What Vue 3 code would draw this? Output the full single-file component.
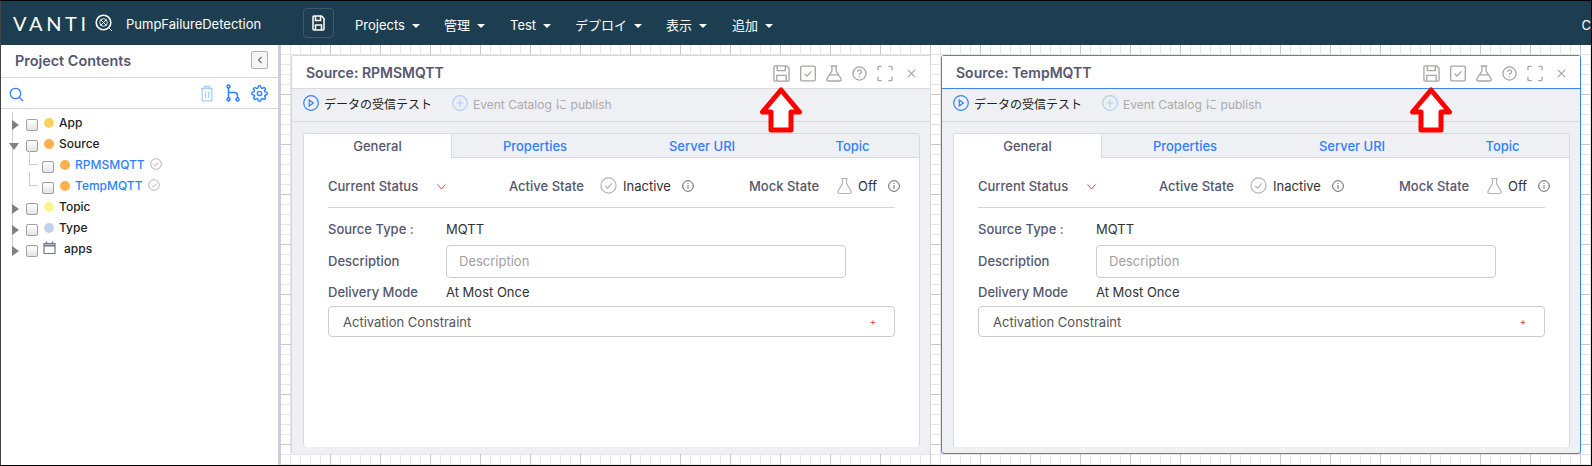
<template>
  <div class="page">
    <header class="navbar">
      <div class="logo">
        <span>VANTI</span>
        <svg width="18" height="18" viewBox="0 0 18 18" fill="none" stroke="#fff">
          <circle cx="8.500" cy="8.500" r="7.300" stroke-width="1.600" />
          <circle cx="8.500" cy="8.500" r="3.800" stroke-width=".9" />
          <path d="M5.800 5.800l5.400 5.400M11.200 5.800l-5.400 5.400M13.500 13.500l3.500 3.500" stroke-width="1" />
        </svg>
      </div>
      <span class="app-name">PumpFailureDetection</span>
      <button class="nav-save">
        <svg width="13" height="16" viewBox="0 0 13 16" fill="none" stroke="#fff" stroke-width="1.500">
          <path d="M1 2q0-1 1-1h7.500l2.500 2.500v10.500q0 1-1 1h-9q-1 0-1-1z" />
          <path d="M3.500 1v4.500h5v-4.500M3.500 15v-5h6v5" />
        </svg>
      </button>
      <nav class="menu">
        <span v-for="m in menus" :key="m.label" class="menu-item" :style="{ width: m.width + 'px' }">
          {{ m.label }}<i class="caret"></i>
        </span>
      </nav>
      <span class="nav-right">C</span>
    </header>

    <div class="main">
      <aside class="sidebar">
        <div class="side-title">
          <span>Project Contents</span>
          <button class="collapse">
            <svg width="6" height="8" viewBox="0 0 6 8" fill="none" stroke="#777" stroke-width="1.200"><path d="M4.500 1L1.500 4l3 3" /></svg>
          </button>
        </div>
        <div class="side-tools">
          <svg class="search" width="15" height="15" viewBox="0 0 15 15" fill="none" stroke="#2f7fff" stroke-width="1.300">
            <circle cx="6.500" cy="6.500" r="5.200" /><path d="M10.300 10.300l3.700 3.700" />
          </svg>
          <svg class="tool trash" width="14" height="17" viewBox="0 0 14 17" fill="none" stroke="#a9d0fb" stroke-width="1.300">
            <path d="M1 3.500h12M4.500 3.500v-2h5v2M2.200 3.500v12.300h9.600v-12.300M5.500 6.500v6.500M8.500 6.500v6.500" />
          </svg>
          <svg class="tool" width="14" height="18" viewBox="0 0 14 18" fill="none" stroke="#2f7fff" stroke-width="1.500">
            <circle cx="2.500" cy="2.500" r="1.500" /><circle cx="2.500" cy="15.500" r="1.500" /><circle cx="11.500" cy="15.500" r="1.500" />
            <path d="M2.500 4v10M2.500 8.500h6q3 0 3 3v2.500" />
          </svg>
          <svg class="tool" width="17" height="17" viewBox="0 0 24 24" fill="none" stroke="#2f7fff" stroke-width="2">
            <circle cx="12" cy="12" r="3" />
            <path d="M19.400 15a1.650 1.650 0 0 0 .33 1.820l.06.06a2 2 0 1 1-2.830 2.830l-.06-.06a1.650 1.650 0 0 0-2.820 1.170V21a2 2 0 1 1-4 0v-.09a1.650 1.650 0 0 0-2.820-1.170l-.06.06a2 2 0 1 1-2.830-2.830l.06-.06A1.650 1.650 0 0 0 3.090 14H3a2 2 0 1 1 0-4h.09a1.650 1.650 0 0 0 1.170-2.820l-.06-.06a2 2 0 1 1 2.830-2.830l.06.06A1.650 1.650 0 0 0 10 3.090V3a2 2 0 1 1 4 0v.09a1.650 1.650 0 0 0 2.820 1.170l.06-.06a2 2 0 1 1 2.830 2.830l-.06.06A1.650 1.650 0 0 0 20.910 10H21a2 2 0 1 1 0 4h-.09a1.650 1.650 0 0 0-1.510 1z" />
          </svg>
        </div>
        <ul class="tree">
          <li v-for="n in nodes" :key="n.label" class="tree-row" :class="{ child: n.child, last: n.last }">
            <i v-if="!n.child" class="arrow" :class="{ open: n.open }"></i>
            <span class="check"></span>
            <svg v-if="n.folder" class="cal" width="13" height="13" viewBox="0 0 13 13" fill="none" stroke="#6f7a8c">
              <path d="M1 2.500h11v10h-11z" stroke-width="1.200" /><path d="M1 4.500h11" stroke-width="2" /><path d="M3.500 .5v2M9.500 .5v2" stroke-width="1.300" />
            </svg>
            <span v-else class="dot" :style="{ background: n.color }"></span>
            <span class="node-label" :class="{ link: n.child, apps: n.folder }">{{ n.label }}</span>
            <svg v-if="n.child" class="ok" width="12" height="12" viewBox="0 0 12 12" fill="none" stroke="#b5b5b5">
              <circle cx="6" cy="6" r="5.300" /><path d="M3.500 6.200l1.800 1.700 3.200-3.400" />
            </svg>
          </li>
        </ul>
      </aside>

      <section class="canvas">
        <article v-for="p in panels" :key="p.name" class="panel" :class="{ active: p.active }" :style="{ left: p.left + 'px' }">
          <div class="panel-head">
            <h2>Source: {{ p.name }}</h2>
            <div class="head-icons">
              <svg width="17" height="17" viewBox="0 0 18 18" fill="none" stroke="#a8a6a4" stroke-width="1.400">
                <path d="M1 2q0-1 1-1h12.500l2.500 2.500v12.500q0 1-1 1h-14q-1 0-1-1z" />
                <path d="M4.500 1v5h8.500v-5M4 17v-6h10v6" />
              </svg>
              <svg width="16" height="17" viewBox="0 0 17 17" fill="none" stroke="#a8a6a4" stroke-width="1.400">
                <rect x=".7" y=".7" width="15.600" height="15.600" rx="1.500" /><path d="M5 8.800l2.500 2.500 4.500-5" />
              </svg>
              <svg width="16" height="17" viewBox="0 0 17 18" fill="none" stroke="#a8a6a4" stroke-width="1.400">
                <path d="M5 1h7M6.300 1v5.500l-5 7.500q-1.300 3 1.700 3h11q3 0 1.700-3l-5-7.500v-5.500M4 10.500h9" />
              </svg>
              <svg width="15" height="15" viewBox="0 0 16 16" fill="none" stroke="#a8a6a4" stroke-width="1.400">
                <circle cx="8" cy="8" r="7" /><path d="M5.800 6.200q.3-2 2.300-2t2.100 1.900q0 1.200-1.200 1.800-1 .5-1 1.600M8 11v1.200" />
              </svg>
              <svg width="16" height="17" viewBox="0 0 17 17" fill="none" stroke="#a8a6a4" stroke-width="1.400">
                <path d="M1 5v-3q0-1 1-1h3M12 1h3q1 0 1 1v3M16 12v3q0 1-1 1h-3M5 16h-3q-1 0-1-1v-3" />
              </svg>
              <svg class="close" width="9" height="9" viewBox="0 0 10 10" fill="none" stroke="#a8a6a4" stroke-width="1.400">
                <path d="M1 1l8 8M9 1l-8 8" />
              </svg>
            </div>
            <svg class="red-arrow" width="46" height="50" viewBox="0 0 46 50" fill="#fff" stroke="#f00" stroke-width="5" stroke-linejoin="round">
              <path d="M23 5L4.500 27h8.500v18h20v-18h8.500z" />
            </svg>
          </div>
          <div class="panel-tools">
            <span class="tool-btn">
              <svg width="16" height="16" viewBox="0 0 16 16" fill="none" stroke="#2f7fff" stroke-width="1.200">
                <circle cx="8" cy="8" r="7.300" /><path d="M6.300 5l4 3-4 3z" />
              </svg>
              データの受信テスト
            </span>
            <span class="tool-btn off">
              <svg width="16" height="16" viewBox="0 0 16 16" fill="none" stroke="#a9d0fb" stroke-width="1.200">
                <circle cx="8" cy="8" r="7.300" /><path d="M8 4.500v7M4.500 8h7" />
              </svg>
              Event Catalog に publish
            </span>
          </div>
          <div class="card">
            <div class="tabs">
              <span class="tab current">General</span>
              <span class="tab">Properties</span>
              <span class="tab">Server URI</span>
              <span class="tab">Topic</span>
            </div>
            <div class="card-body">
              <div class="status-row">
                <span class="label status-label">Current Status</span>
                <svg class="down" width="9" height="6" viewBox="0 0 9 6" fill="none" stroke="#f0364a"><path d="M.5 .5l4 4.500 4-4.500" /></svg>
                <span class="label active-label">Active State</span>
                <svg class="state-icon" width="17" height="17" viewBox="0 0 18 18" fill="none" stroke="#b5b5b5" stroke-width="1.300">
                  <circle cx="9" cy="9" r="8" /><path d="M5.500 9.500l2.500 2.200 4.500-5" />
                </svg>
                <span class="value">Inactive</span>
                <svg class="info" width="12" height="12" viewBox="0 0 13 13" fill="none" stroke="#555"><circle cx="6.500" cy="6.500" r="5.800" /><path d="M6.500 5.500v4M6.500 3.300v1" /></svg>
                <span class="label mock-label">Mock State</span>
                <svg class="state-icon flask" width="15" height="18" viewBox="0 0 16 18" fill="none" stroke="#b5b5b5" stroke-width="1.300">
                  <path d="M4.500 1h7M5.800 1v5.500l-4.500 7.500q-1.300 3 1.700 3h10q3 0 1.700-3l-4.500-7.500v-5.500" />
                </svg>
                <span class="value">Off</span>
                <svg class="info" width="12" height="12" viewBox="0 0 13 13" fill="none" stroke="#555"><circle cx="6.500" cy="6.500" r="5.800" /><path d="M6.500 5.500v4M6.500 3.300v1" /></svg>
              </div>
              <div class="divider"></div>
              <div class="field type-row"><span class="label">Source Type :</span><span class="value">MQTT</span></div>
              <div class="field desc-row">
                <span class="label">Description</span>
                <input class="desc-input" placeholder="Description" />
              </div>
              <div class="field mode-row"><span class="label">Delivery Mode</span><span class="value">At Most Once</span></div>
              <div class="constraint"><span>Activation Constraint</span><b>+</b></div>
            </div>
          </div>
        </article>
      </section>
    </div>
  </div>
</template>

<script setup>
const menus = [
  { label: 'Projects', width: 89 },
  { label: '管理', width: 66 },
  { label: 'Test', width: 65 },
  { label: 'デプロイ', width: 91 },
  { label: '表示', width: 66 },
  { label: '追加', width: 60 }
]

const nodes = [
  { label: 'App', color: '#fbd35f' },
  { label: 'Source', color: '#ffb04d', open: true },
  { label: 'RPMSMQTT', color: '#ffb04d', child: true },
  { label: 'TempMQTT', color: '#ffb04d', child: true, last: true },
  { label: 'Topic', color: '#f8f58c' },
  { label: 'Type', color: '#c3d0ef' },
  { label: 'apps', folder: true }
]

// ウィンドウはキャンバス上の自由配置
const panels = [
  { name: 'RPMSMQTT', left: 10, active: false },
  { name: 'TempMQTT', left: 660, active: true }
]
</script>

<style>
html, body { margin: 0; background: #fff; overflow: hidden; }
</style>

<style scoped>
.page {
  width: 1592px;
  height: 466px;
  box-sizing: border-box;
  border: 1px solid #000;
  border-left-color: #444;
  overflow: hidden;
  display: flex;
  flex-direction: column;
  font-family: Inter, "Noto Sans CJK JP", sans-serif;
  font-size: 13px;
  color: #333;
}
.navbar {
  height: 44px;
  flex: none;
  background: #1c3e50;
  color: #fff;
  display: flex;
  align-items: center;
  padding-left: 12px;
  position: relative;
}
.logo {
  display: flex;
  align-items: center;
  gap: 5px;
  width: 113px;
  font-family: Lato, sans-serif;
  font-weight: 400;
  font-size: 20px;
  letter-spacing: 3.6px;
}
.app-name { font-size: 13px; width: 177px; padding-top: 2px; }
.nav-save {
  width: 31px;
  height: 30px;
  padding: 0;
  background: transparent;
  border: 1px solid #3d5a6c;
  border-radius: 4px;
  display: flex;
  align-items: center;
  justify-content: center;
  margin-right: 21px;
}
.menu { display: flex; align-items: baseline; padding-top: 2px; }
.menu-item { font-size: 13px; white-space: nowrap; }
.caret {
  display: inline-block;
  margin-left: 7px;
  vertical-align: 2px;
  border-top: 4px solid #fff;
  border-left: 4px solid transparent;
  border-right: 4px solid transparent;
}
.nav-right { position: absolute; right: 0; top: 16px; font-size: 13px; }
.main { flex: 1; display: flex; min-height: 0; }
.sidebar {
  width: 277px;
  flex: none;
  background: #fff;
  box-sizing: border-box;
}
.side-title {
  height: 33px;
  box-sizing: border-box;
  display: flex;
  align-items: center;
  justify-content: space-between;
  padding: 0 10px 2px 14px;
  border-bottom: 1px solid #d5d8dc;
  font-size: 14.4px;
  font-weight: 600;
  color: #555770;
}
.collapse {
  width: 17px;
  height: 18px;
  padding: 0;
  background: #f4f5f7;
  border: 1px solid #b5b0aa;
  border-radius: 2px;
  display: flex;
  align-items: center;
  justify-content: center;
}
.side-tools {
  height: 31px;
  box-sizing: border-box;
  display: flex;
  align-items: center;
  gap: 11px;
  padding: 0 10px 0 8px;
  border-bottom: 1px solid #d5d8dc;
}
.search { margin-right: auto; margin-top: 2px; }
.trash { margin-right: 1px; }
.tree {
  list-style: none;
  margin: 3px 0 0 11px;
  padding: 0;
  border-left: 1px solid #d0d0d0;
  width: 220px;
  height: 141px;
}
.tree-row {
  height: 21px;
  display: flex;
  align-items: center;
  position: relative;
  padding-left: 13px;
  font-size: 12px;
  font-weight: 500;
  color: #222;
}
.tree-row.child { padding-left: 29px; }
.tree-row.child::before {
  content: "";
  position: absolute;
  left: 16px;
  top: -3px;
  width: 8px;
  height: 13px;
  border-left: 1px solid #ccc;
  border-bottom: 1px solid #ccc;
}
.arrow {
  position: absolute;
  left: -1px;
  top: 8px;
  border-left: 7px solid #808080;
  border-top: 5px solid transparent;
  border-bottom: 5px solid transparent;
}
.arrow.open {
  left: -4px;
  top: 10px;
  border-left: 5px solid transparent;
  border-right: 5px solid transparent;
  border-top: 7px solid #808080;
  border-bottom: 0;
}
.check {
  width: 10px;
  height: 10px;
  border: 1px solid #a0a0a0;
  border-radius: 2px;
  background: linear-gradient(#fff, #e4e4e4);
  margin-top: 4px;
  flex: none;
}
.dot {
  width: 10px;
  height: 10px;
  border-radius: 50%;
  margin: 0 5px 0 6px;
  flex: none;
}
.cal { margin: -2px 6px 0 5px; flex: none; }
.node-label.apps { margin-left: 2px; }
.node-label.link { color: #2f7fff; }
.ok { margin-left: 5px; margin-top: -2px; }
.canvas {
  flex: 1;
  position: relative;
  border-left: 3px solid #ccd0dc;
  background-color: #fff;
  background-image:
    linear-gradient(#c9c9c9 1px, transparent 1px),
    linear-gradient(90deg, #c9c9c9 1px, transparent 1px),
    linear-gradient(#e6e6e6 1px, transparent 1px),
    linear-gradient(90deg, #e6e6e6 1px, transparent 1px);
  background-size: 50px 50px, 50px 50px, 10px 10px, 10px 10px;
  background-position: -1px -1px;
}
.panel {
  position: absolute;
  top: 10px;
  width: 640px;
  height: 399px;
  box-sizing: border-box;
  background: #eff0f4;
  border: 1px solid #d8d8d8;
  border-bottom: 0;
  border-radius: 3px;
  display: flex;
  flex-direction: column;
}
.panel.active { border: 1px solid #3b82f6; }
.panel-head {
  height: 33px;
  box-sizing: border-box;
  flex: none;
  background: #fff;
  border-bottom: 1px solid #d8dadf;
  display: flex;
  align-items: center;
  justify-content: space-between;
  padding: 0 14px 0 14px;
  position: relative;
}
.panel.active .panel-head { border-bottom-color: #3b82f6; }
.panel-head h2 { margin: 0; font-size: 14px; font-weight: 600; color: #555770; }
.head-icons { display: flex; align-items: center; gap: 10px; margin-top: 2px; }
.head-icons .close { margin-left: 4px; }
.red-arrow { position: absolute; left: 466px; top: 29px; z-index: 2; }
.panel-tools {
  height: 33px;
  box-sizing: border-box;
  flex: none;
  border-bottom: 1px solid #d8dadf;
  display: flex;
  align-items: center;
  gap: 20px;
  padding: 0 0 4px 11px;
}
.tool-btn { display: flex; align-items: center; gap: 5px; font-size: 12px; color: #222; }
.tool-btn.off { color: #aaa; }
.card {
  margin: 11px 10px 0 11px;
  height: 314px;
  box-sizing: border-box;
  border: 1px solid #d8dadf;
  border-bottom: 0;
  border-radius: 3px;
  background: #fff;
  display: flex;
  flex-direction: column;
}
.tabs {
  display: grid;
  grid-template-columns: 148px 166px 168px 1fr;
  height: 24px;
  box-sizing: border-box;
  flex: none;
  background: #eff0f4;
  border-bottom: 1px solid #d8dadf;
}
.tab {
  display: flex;
  align-items: center;
  justify-content: center;
  font-size: 13px;
  font-weight: 500;
  color: #2f7fff;
}
.tab.current {
  background: #fff;
  color: #555770;
  margin-bottom: -1px;
  border-radius: 3px 3px 0 0;
  border-right: 1px solid #d8dadf;
}
.card-body { padding: 0 24px; }
.status-row {
  height: 49px;
  box-sizing: border-box;
  padding-top: 6px;
  display: flex;
  align-items: center;
  white-space: nowrap;
}
.status-row > * { flex: none; }
.label { font-size: 13px; font-weight: 500; color: #555770; }
.value { font-size: 13px; color: #333; }
.status-label { width: 109px; }
.down { margin-top: 3px; }
.active-label { margin-left: 63px; width: 91px; }
.state-icon { margin-right: 6px; }
.info { margin-left: 11px; }
.mock-label { margin-left: 55px; width: 88px; }
.divider { height: 1px; background: #d5d5d5; width: 567px; }
.field { display: flex; align-items: center; white-space: nowrap; }
.field .label { width: 118px; flex: none; }
.type-row { height: 36px; box-sizing: border-box; padding-top: 6px; }
.desc-row { height: 34px; }
.desc-input {
  width: 400px;
  height: 33px;
  box-sizing: border-box;
  border: 1px solid #ccc;
  border-radius: 4px;
  padding: 0 12px;
  font: 13px Inter, sans-serif;
  outline: 0;
}
.desc-input::placeholder { color: #a0a0a0; }
.mode-row { height: 28px; }
.constraint {
  width: 567px;
  height: 31px;
  box-sizing: border-box;
  border: 1px solid #ccc;
  border-radius: 4px;
  display: flex;
  align-items: center;
  justify-content: space-between;
  padding: 0 18px 0 14px;
  font-size: 13px;
  color: #555;
}
.constraint b { color: #e23; font-size: 9px; font-weight: 400; }
</style>
